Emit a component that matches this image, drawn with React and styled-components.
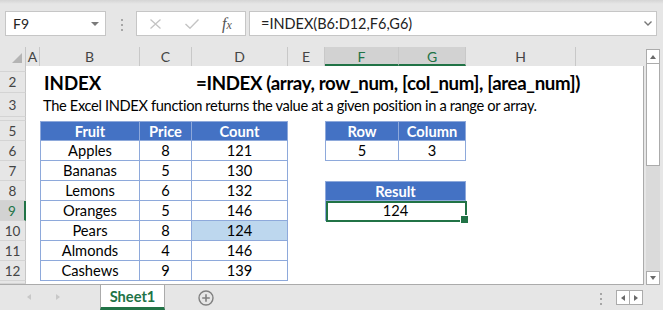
import React from 'react'
import styled, { createGlobalStyle } from 'styled-components'

const GREEN = '#217346'
const BLUE = '#4472c4'
const LINE = '#8ea9db'
const CHROME = '#e6e6e6'

const COLS = [
  { key: 'A', w: 14 },
  { key: 'B', w: 100 },
  { key: 'C', w: 52 },
  { key: 'D', w: 96 },
  { key: 'E', w: 37 },
  { key: 'F', w: 74, active: true },
  { key: 'G', w: 67, active: true },
  { key: 'H', w: 110 },
]

const fruits = [
  ['Apples', 8, 121],
  ['Bananas', 5, 130],
  ['Lemons', 6, 132],
  ['Oranges', 5, 146],
  ['Pears', 8, 124],
  ['Almonds', 4, 146],
  ['Cashews', 9, 139],
]

const GlobalStyle = createGlobalStyle`
  html, body {
    margin: 0;
    padding: 0;
    background: ${CHROME};
    overflow: hidden;
  }
  * { box-sizing: border-box; }
`

const Window = styled.div`
    width: 663px;
    height: 310px;
    display: flex;
    flex-direction: column;
    background: ${CHROME};
    font-family: Lato, "Open Sans", sans-serif;
    color: #000;
`

// ---------- formula bar ----------
const FormulaBar = styled.div`
    height: 47px;
    flex: none;
    display: flex;
    align-items: flex-start;
    padding: 11px 0 0 5px;
    background: linear-gradient(#d5d5d5, ${CHROME} 4px);
`
const NameBox = styled.div`
    width: 101px;
    height: 25px;
    background: #fff;
    border: 1px solid #c6c6c6;
    display: flex;
    align-items: center;
    justify-content: space-between;
    padding: 0 6px 0 7px;
    font-size: 14px;
    color: #222;
`
const Caret = styled.span`
    width: 0;
    height: 0;
    border-left: 4px solid transparent;
    border-right: 4px solid transparent;
    border-top: 4px solid #7a7a7a;
`
const Dots = styled.div`
    display: flex;
    flex-direction: column;
    gap: 3px;
    margin: 8px 0 0 ${({ $ml }) => $ml ?? 15}px;
    span {
        width: 2px;
        height: 2px;
        background: #a6a6a6;
    }
`
const FxBox = styled.div`
    width: 110px;
    height: 25px;
    margin-left: 13px;
    background: #fff;
    border: 1px solid #c6c6c6;
    display: flex;
    align-items: center;
    padding-left: 13px;
    gap: 24px;
`
const Fx = styled.span`
    font-family: "Liberation Serif", serif;
    font-style: italic;
    font-size: 16px;
    color: #555;
    margin-left: -1px;
    span { font-size: 12px; }
`
const FormulaInput = styled.div`
    width: 408px;
    height: 25px;
    margin-left: 3px;
    background: #fff;
    border: 1px solid #c6c6c6;
    display: flex;
    align-items: center;
    justify-content: space-between;
    padding: 0 4px 0 11px;
    font-size: 14.5px;
    color: #222;
`

// ---------- sheet ----------
const SheetArea = styled.div`
    flex: none;
    height: 238px;
    display: flex;
`
const SheetMain = styled.div`
    width: 644px;
    display: flex;
    flex-direction: column;
`
const HeaderRow = styled.div`
    height: 19px;
    flex: none;
    display: flex;
    background: ${CHROME};
`
const Corner = styled.div`
    width: 26px;
    flex: none;
    position: relative;
    border-right: 1px solid #c6c6c6;
    &::after {
        content: '';
        position: absolute;
        right: 3px;
        bottom: 3px;
        border-left: 10px solid transparent;
        border-bottom: 10px solid #b4b4b4;
    }
`
const ColHead = styled.div`
    width: ${({ $w }) => $w}px;
    flex: none;
    display: flex;
    align-items: center;
    justify-content: center;
    font-size: 14px;
    color: ${({ $active }) => ($active ? GREEN : '#444')};
    background: ${({ $active }) => ($active ? '#d2d2d2' : CHROME)};
    border-right: 1px solid #c8c8c8;
    border-bottom: ${({ $active }) => ($active ? `2px solid ${GREEN}` : '0')};
    padding-top: ${({ $active }) => ($active ? '2px' : '0')};
`
const Body = styled.div`
    flex: 1;
    display: grid;
    grid-template-columns: 26px ${COLS.map((c) => c.w + 'px').join(' ')} 1fr;
    grid-template-rows: 6px 21px 24px 4px repeat(8, 20px) 1fr;
    background: #fff;
    border-right: 1px solid #ababab;
    border-bottom: 1px solid #ababab;
    overflow: hidden;
`
const RowHead = styled.div`
    grid-column: 1;
    grid-row: ${({ $row }) => $row};
    display: flex;
    align-items: center;
    justify-content: center;
    overflow: hidden;
    font-size: 13.5px;
    color: ${({ $active }) => ($active ? GREEN : '#444')};
    background: ${({ $active }) => ($active ? '#d2d2d2' : CHROME)};
    border-right: ${({ $active }) => ($active ? `2px solid ${GREEN}` : '1px solid #c6c6c6')};
    border-bottom: 1px solid #d4d4d4;
`
const Cell = styled.div`
    grid-column: ${({ $col }) => $col};
    grid-row: ${({ $row }) => $row};
    display: flex;
    align-items: center;
    justify-content: ${({ $align }) => $align || 'center'};
    padding-left: ${({ $pad }) => $pad || 0}px;
    font-size: 14.67px;
    letter-spacing: ${({ $tight }) => ($tight ? '-0.35px' : 'normal')};
    white-space: nowrap;
    min-width: 0;
`
const Title = styled(Cell)`
    font-size: 18.67px;
    font-weight: 700;
`
const TableCell = styled(Cell)`
    background: ${({ $head, $fill }) => ($head ? BLUE : $fill || '#fff')};
    color: ${({ $head }) => ($head ? '#fff' : '#000')};
    font-weight: ${({ $head }) => ($head ? 700 : 400)};
    border-right: 1px solid ${LINE};
    border-bottom: 1px solid ${LINE};
    border-left: ${({ $edge }) => ($edge ? `1px solid ${LINE}` : '0')};
    border-top: ${({ $head }) => ($head ? `1px solid ${LINE}` : '0')};
`
const Selected = styled(TableCell)`
    position: relative;
    z-index: 1;
    &::before {
        content: '';
        position: absolute;
        top: 0;
        left: 0;
        right: -2px;
        bottom: -2px;
        border: 2px solid ${GREEN};
    }
    &::after {
        content: '';
        position: absolute;
        right: -4px;
        bottom: -4px;
        width: 7px;
        height: 7px;
        background: ${GREEN};
        border: 1px solid #fff;
    }
`

const VScroll = styled.div`
    width: 19px;
    display: flex;
    flex-direction: column;
    padding: 2px 3px 0 2px;
`
const ScrollBtn = styled.div`
    height: ${({ $h }) => $h || 15}px;
    flex: none;
    background: #fff;
    border: 1px solid #ababab;
    display: flex;
    align-items: center;
    justify-content: center;
`
const Thumb = styled.div`
    height: 102px;
    flex: none;
    background: #fff;
    border: 1px solid #ababab;
    border-top: 0;
`
const Track = styled.div`
    flex: 1;
    background: #dadada;
`
const Tri = styled.span`
    width: 0;
    height: 0;
    border-left: 3.5px solid transparent;
    border-right: 3.5px solid transparent;
    border-${({ $dir }) => ($dir === 'up' ? 'bottom' : 'top')}: 4px solid #6a6a6a;
`
const SideTri = styled.span`
    width: 0;
    height: 0;
    border-top: 3.5px solid transparent;
    border-bottom: 3.5px solid transparent;
    border-${({ $dir }) => ($dir === 'left' ? 'right' : 'left')}: 4px solid ${({ $c }) => $c || '#6a6a6a'};
`

// ---------- tab bar ----------
const TabBar = styled.div`
    flex: 1;
    display: flex;
    align-items: stretch;
    background: ${CHROME};
`
const TabNav = styled.div`
    width: 100px;
    display: flex;
    align-items: center;
    padding: 0 0 1px 27px;
    gap: 25px;
`
const SheetTab = styled.div`
    width: 65px;
    background: #fff;
    border-left: 1px solid #ababab;
    border-right: 1px solid #ababab;
    border-bottom: 3px solid ${GREEN};
    display: flex;
    align-items: center;
    justify-content: center;
    padding-top: 1px;
    font-size: 14.67px;
    font-weight: 700;
    color: ${GREEN};
`
const AddSheet = styled.div`
    margin-left: 33px;
    display: flex;
    align-items: center;
`
const Spacer = styled.div`
    flex: 1;
`
const HScrollBtns = styled.div`
    display: flex;
    align-items: center;
    margin: 0 20px 0 14px;
`
const HBtn = styled.div`
    width: 14px;
    height: 15px;
    background: #fff;
    border: 1px solid #ababab;
    margin-left: ${({ $first }) => ($first ? 0 : -1)}px;
    display: flex;
    align-items: center;
    justify-content: center;
`

export default function App() {
  return (
    <Window>
      <GlobalStyle />
      <FormulaBar>
        <NameBox>
          F9
          <Caret />
        </NameBox>
        <Dots>
          <span />
          <span />
          <span />
        </Dots>
        <FxBox>
          <svg width="11" height="10" viewBox="0 0 11 10">
            <path d="M0.5 0.5 L10.5 9.5 M10.5 0.5 L0.5 9.5" stroke="#c4c4c4" strokeWidth="1.3" fill="none" />
          </svg>
          <svg width="14" height="10" viewBox="0 0 14 10">
            <path d="M0.5 5 L5 9.2 L13.5 0.6" stroke="#c4c4c4" strokeWidth="1.4" fill="none" />
          </svg>
          <Fx>
            f<span>x</span>
          </Fx>
        </FxBox>
        <FormulaInput>
          =INDEX(B6:D12,F6,G6)
          <svg width="8" height="5" viewBox="0 0 8 5">
            <path d="M0.5 0.5 L4 4 L7.5 0.5" stroke="#777" strokeWidth="1.4" fill="none" />
          </svg>
        </FormulaInput>
      </FormulaBar>

      <SheetArea>
        <SheetMain>
          <HeaderRow>
            <Corner />
            {COLS.map((c) => (
              <ColHead key={c.key} $w={c.w} $active={c.active}>
                {c.key}
              </ColHead>
            ))}
          </HeaderRow>
          <Body>
            {Array.from({ length: 12 }, (_, i) => (
              <RowHead key={i} $row={i + 1} $active={i + 1 === 9}>
                {i + 1 === 1 || i + 1 === 4 ? null : i + 1}
              </RowHead>
            ))}
            <RowHead $row={13} />

            <Title $col={3} $row={2} $align="flex-start" $pad={4}>
              INDEX
            </Title>
            <Title $col="5 / -1" $row={2} $align="flex-start" $pad={4} $tight>
              =INDEX (array, row_num, [col_num], [area_num])
            </Title>
            <Cell $col="3 / -1" $row={3} $align="flex-start" $pad={3} $tight>
              The Excel INDEX function returns the value at a given position in a range or array.
            </Cell>

            <TableCell $head $edge $col={3} $row={5}>Fruit</TableCell>
            <TableCell $head $col={4} $row={5}>Price</TableCell>
            <TableCell $head $col={5} $row={5}>Count</TableCell>
            {fruits.map(([name, price, count], i) => (
              <React.Fragment key={name}>
                <TableCell $edge $col={3} $row={i + 6}>{name}</TableCell>
                <TableCell $col={4} $row={i + 6}>{price}</TableCell>
                <TableCell $col={5} $row={i + 6} $fill={name === 'Pears' ? '#bdd7ee' : null}>
                  {count}
                </TableCell>
              </React.Fragment>
            ))}

            <TableCell $head $edge $col={7} $row={5}>Row</TableCell>
            <TableCell $head $col={8} $row={5}>Column</TableCell>
            <TableCell $edge $col={7} $row={6}>5</TableCell>
            <TableCell $col={8} $row={6}>3</TableCell>

            <TableCell $head $edge $col="7 / 9" $row={8}>Result</TableCell>
            <Selected $edge $col="7 / 9" $row={9}>124</Selected>
          </Body>
        </SheetMain>
        <VScroll>
          <ScrollBtn>
            <Tri $dir="up" />
          </ScrollBtn>
          <Thumb />
          <Track />
          <ScrollBtn $h={14}>
            <Tri $dir="down" />
          </ScrollBtn>
        </VScroll>
      </SheetArea>

      <TabBar>
        <TabNav>
          <SideTri $dir="left" $c="#c8c8c8" />
          <SideTri $dir="right" $c="#c8c8c8" />
        </TabNav>
        <SheetTab>Sheet1</SheetTab>
        <AddSheet>
          <svg width="16" height="16" viewBox="0 0 16 16">
            <circle cx="8" cy="8" r="7" stroke="#808080" strokeWidth="1.4" fill="none" />
            <path d="M8 4.2 V11.8 M4.2 8 H11.8" stroke="#808080" strokeWidth="1.6" />
          </svg>
        </AddSheet>
        <Spacer />
        <Dots $ml={0}>
          <span />
          <span />
          <span />
        </Dots>
        <HScrollBtns>
          <HBtn $first>
            <SideTri $dir="left" />
          </HBtn>
          <HBtn>
            <SideTri $dir="right" />
          </HBtn>
        </HScrollBtns>
      </TabBar>
    </Window>
  )
}
